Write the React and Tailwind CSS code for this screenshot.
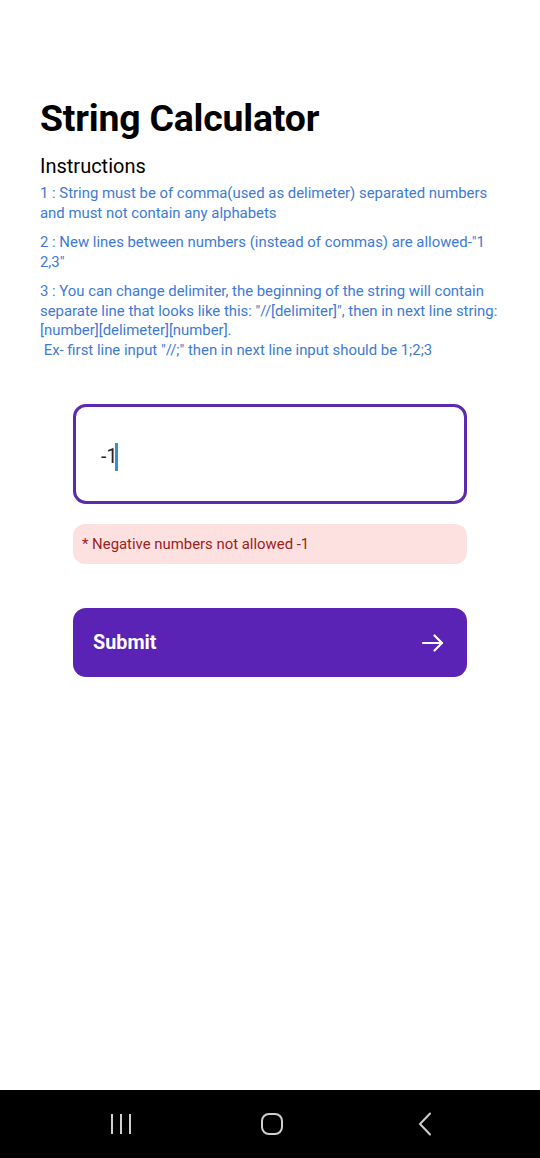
import React from "react";

export default function App() {
  return (
    <div className="w-[540px] h-[1158px] bg-white flex flex-col" style={{ fontFamily: "Roboto, 'Noto Sans', sans-serif" }}>
      <div className="flex-1 flex flex-col">
        <div className="pt-[97px] px-[40px]">
          <h1 className="text-[37.4px] leading-[42px] font-bold text-black tracking-[-0.2px]">String Calculator</h1>
          <h2 className="mt-[15px] text-[20px] leading-[24px] text-black">Instructions</h2>
          <div className="mt-[6px] text-[14.9px] leading-[19.5px] text-[#3d7ad6] flex flex-col gap-[10px]">
            <p>1 : String must be of comma(used as delimeter) separated numbers and must not contain any alphabets</p>
            <p>2 : New lines between numbers (instead of commas) are allowed-"1<br />2,3"</p>
            <p>
              3 : You can change delimiter, the beginning of the string will contain separate line that looks like this: "//[delimiter]", then in next line string: [number][delimeter][number].
              <br />&nbsp;Ex- first line input "//;" then in next line input should be 1;2;3
            </p>
          </div>
        </div>
        <div className="mt-[44px] px-[73px] flex flex-col">
          <div className="h-[100px] rounded-[13px] border-[3px] border-[#5b2aae] flex items-center pl-[25px]">
            <span className="text-[19.5px] text-[#222] leading-none mt-[6px]">-1</span>
            <span className="w-[3px] h-[28px] bg-[#3a8fd0] ml-[-2px] mt-[6px]" />
          </div>
          <div className="mt-[20px] h-[40px] rounded-[12px] bg-[#fde1e1] flex items-center pl-[9px] text-[14.9px] text-[#9e1c1c]">
            * Negative numbers not allowed -1
          </div>
          <div className="mt-[44px] h-[69px] rounded-[13px] bg-[#5a22b5] flex items-center justify-between pl-[20px] pr-[22px]">
            <span className="text-white font-bold text-[19.8px]">Submit</span>
            <svg width="24" height="24" viewBox="0 0 24 24" fill="none" stroke="white" strokeWidth="2.2" strokeLinecap="round" strokeLinejoin="round">
              <path d="M2 12h19" />
              <path d="M13.5 4.5L21 12l-7.5 7.5" />
            </svg>
          </div>
        </div>
      </div>
      <div className="h-[68px] bg-black flex items-center pl-[110px]">
        <svg width="22" height="22" viewBox="0 0 22 22" fill="none" stroke="#cfcfcf" strokeWidth="2">
          <path d="M2 1v20M11 1v20M20 1v20" />
        </svg>
        <svg className="ml-[129px]" width="22" height="22" viewBox="0 0 22 22" fill="none" stroke="#cfcfcf" strokeWidth="2">
          <rect x="1" y="1" width="20" height="20" rx="7" />
        </svg>
        <svg className="ml-[135px]" width="14" height="24" viewBox="0 0 14 24" fill="none" stroke="#cfcfcf" strokeWidth="2" strokeLinecap="round">
          <path d="M12 1.5L2 12l10 10.5" />
        </svg>
      </div>
    </div>
  );
}
